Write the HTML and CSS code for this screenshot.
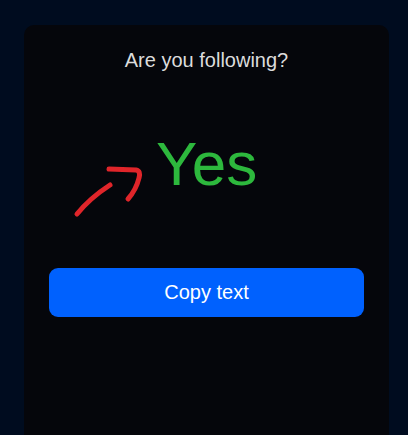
FILE: index.html
```html
<!DOCTYPE html>
<html>
<head>
<meta charset="utf-8">
<link rel="stylesheet" href="styles.css">
</head>
<body>
<div class="page">
  <div class="card">
    <h1 class="title">Are you following?</h1>
    <div class="answer">
      <svg class="arrow" width="80" height="62" viewBox="0 0 80 62">
        <path d="M7 54 Q20 38 40 25" fill="none" stroke="#e0252a" stroke-width="5" stroke-linecap="round"/>
        <path d="M39 9 L66 10 Q71 11 69 18 Q66 30 58 39" fill="none" stroke="#e0252a" stroke-width="5" stroke-linecap="round" stroke-linejoin="round"/>
      </svg>
      <span class="yes">Yes</span>
    </div>
    <button class="copy">Copy text</button>
  </div>
</div>
</body>
</html>
```
FILE: styles.css
```css
html, body {
  margin: 0;
  padding: 0;
  background: #000c1f;
  height: 100%;
  overflow: hidden;
}
.page {
  padding: 25px 19px 0 24px;
}
.card {
  background: #05060b;
  border-radius: 10px;
  height: 420px;
  padding: 0 25px;
  display: flex;
  flex-direction: column;
  font-family: "Liberation Sans", Arial, sans-serif;
}
.title {
  margin: 23px 0 0;
  font-size: 20px;
  font-weight: normal;
  color: #dcdcdc;
  text-align: center;
  line-height: 24px;
}
.answer {
  height: 196px;
  flex-shrink: 0;
  display: flex;
  align-items: flex-start;
  padding-left: 21px;
}
.arrow {
  flex-shrink: 0;
  margin-top: 88px;
}
.yes {
  margin-top: 55px;
  margin-left: 6px;
  font-size: 62px;
  line-height: 74px;
  color: #2db83d;
}
.copy {
  flex-shrink: 0;
  height: 49px;
  border: none;
  border-radius: 9px;
  background: #0061fe;
  color: #ffffff;
  font-family: "Liberation Sans", Arial, sans-serif;
  font-size: 20px;
  width: 100%;
}
```
